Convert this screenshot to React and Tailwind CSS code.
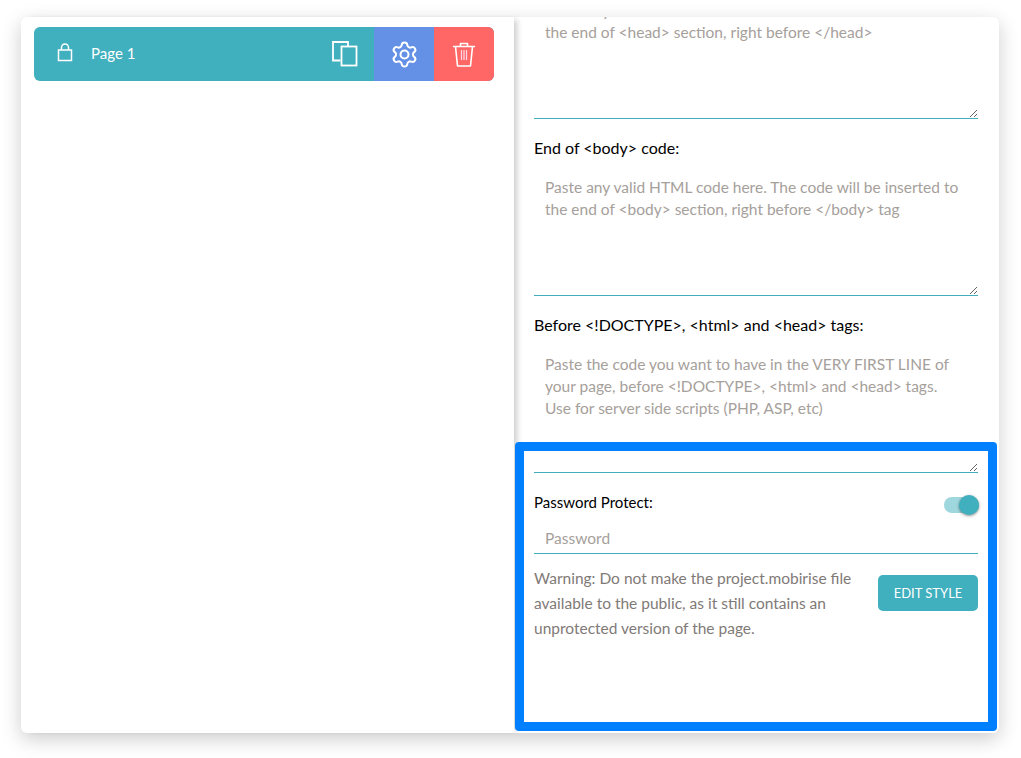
import React from "react";

const font = "[font-family:'Lato','Open_Sans',sans-serif]";

function Field({ label, placeholder, first }) {
  return (
    <div className="flex flex-col">
      {label && <label className="h-[27px] text-[16px] leading-[23px] text-black">{label}</label>}
      <textarea
        readOnly
        placeholder={placeholder}
        className={`w-full h-[133px] resize-y bg-white border-b border-[#40afbe] pl-[11px] pr-[14px] pt-[13px] text-[15.5px] leading-[22px] outline-none placeholder:text-[#a6a09b] mb-[17px] ${first ? "-mt-[31px]" : ""}`}
      />
    </div>
  );
}

export default function App() {
  return (
    <div className={`w-[1021px] h-[758px] bg-white pt-[17px] pl-[21px] overflow-hidden ${font}`}>
      <div className="relative flex w-[978px] h-[716px] rounded-[6px] bg-white shadow-[0_6px_20px_rgba(0,0,0,0.2)]">
        <div className="w-[493px] shrink-0 h-full pt-[10px] pl-[13px] shadow-[6px_0_6px_-3px_rgba(0,0,0,0.2)]">
          <div className="flex w-[460px] h-[54px] rounded-[6px] overflow-hidden bg-[#40afbe] text-white">
            <div className="flex flex-1 items-center pl-[23px]">
              <svg className="-mt-[4px]" width="16" height="19" viewBox="0 0 16 19" fill="none" stroke="currentColor" strokeWidth="1.5">
                <rect x="1.5" y="7" width="13" height="10.500" />
                <path d="M4.500 7V4.500a3.500 3.500 0 0 1 7 0V7" />
              </svg>
              <span className="ml-[18px] -mt-[2px] text-[15px]">Page 1</span>
              <svg className="ml-auto mr-[16px]" width="26" height="26" viewBox="0 0 26 26" fill="none" stroke="currentColor" strokeWidth="1.8">
                <path d="M8.500 19.500H1V1h15v4.500" />
                <rect x="9.500" y="5.500" width="15" height="19" />
              </svg>
            </div>
            <div className="flex w-[60px] items-center justify-center bg-[#6490e6]">
              <svg width="29" height="29" viewBox="0 0 24 24" fill="none" stroke="currentColor" strokeWidth="1.7" strokeLinecap="round" strokeLinejoin="round">
                <path d="M9.671 4.136a2.34 2.34 0 0 1 4.659 0 2.34 2.34 0 0 0 3.319 1.915 2.34 2.34 0 0 1 2.33 4.033 2.34 2.34 0 0 0 0 3.831 2.34 2.34 0 0 1-2.33 4.033 2.34 2.34 0 0 0-3.319 1.915 2.34 2.34 0 0 1-4.659 0 2.34 2.34 0 0 0-3.32-1.915 2.34 2.34 0 0 1-2.33-4.033 2.34 2.34 0 0 0 0-3.831A2.34 2.34 0 0 1 6.35 6.051a2.34 2.34 0 0 0 3.319-1.915" />
                <circle cx="12" cy="12" r="3.300" />
              </svg>
            </div>
            <div className="flex w-[60px] items-center justify-center bg-[#ff6666]">
              <svg width="22" height="25" viewBox="0 0 22 25" fill="none" stroke="currentColor" strokeWidth="1.6" strokeLinejoin="round">
                <path d="M0 4.500h22M7.500 4.500V1.500h7V4.500M2.500 4.500l2 19.500h13l2-19.500" />
                <path d="M8.500 8v10M11 8v10M13.500 8v10" stroke="#ffd3e2" strokeWidth="1.300" />
              </svg>
            </div>
          </div>
        </div>
        <div className="relative flex-1 overflow-hidden rounded-r-[6px]">
          <div className="flex flex-col pl-[20px] pr-[21px]">
            <Field first placeholder="Paste any valid HTML code here. The code will be inserted to the end of <head> section, right before </head>" />
            <Field label="End of <body> code:" placeholder="Paste any valid HTML code here. The code will be inserted to the end of <body> section, right before </body> tag" />
            <Field label="Before <!DOCTYPE>, <html> and <head> tags:" placeholder="Paste the code you want to have in the VERY FIRST LINE of your page, before <!DOCTYPE>, <html> and <head> tags. Use for server side scripts (PHP, ASP, etc)" />
            <div className="flex items-center justify-between h-[28px] -mt-[2px]">
              <span className="text-[15px] text-black">Password Protect:</span>
              <span className="relative block w-[35px] h-[16px] rounded-full bg-[#9fd7de] mr-[-1px] mt-[6px]">
                <span className="absolute right-0 top-[-2px] w-[20px] h-[20px] rounded-full bg-[#40afbe] shadow-[0_1px_3px_rgba(0,0,0,0.45)]" />
              </span>
            </div>
            <input
              readOnly
              placeholder="Password"
              className="mt-[5px] h-[33px] pt-[2px] w-full border-b border-[#40afbe] px-[11px] text-[15.5px] outline-none placeholder:text-[#a6a09b]"
            />
            <div className="flex items-start justify-between mt-[12px]">
              <p className="w-[330px] text-[15.5px] leading-[25px] text-[#7f7a77]">
                Warning: Do not make the project.mobirise file available to the public, as it still contains an unprotected version of the page.
              </p>
              <button className="mt-[9px] w-[100px] h-[36px] pt-[2px] rounded-[5px] bg-[#40afbe] text-white text-[13px]">EDIT STYLE</button>
            </div>
          </div>
          <div className="absolute left-[1px] right-[2px] bottom-[2px] h-[289px] rounded-[4px] border-[9px] border-[#0080ff] pointer-events-none" />
        </div>
      </div>
    </div>
  );
}
